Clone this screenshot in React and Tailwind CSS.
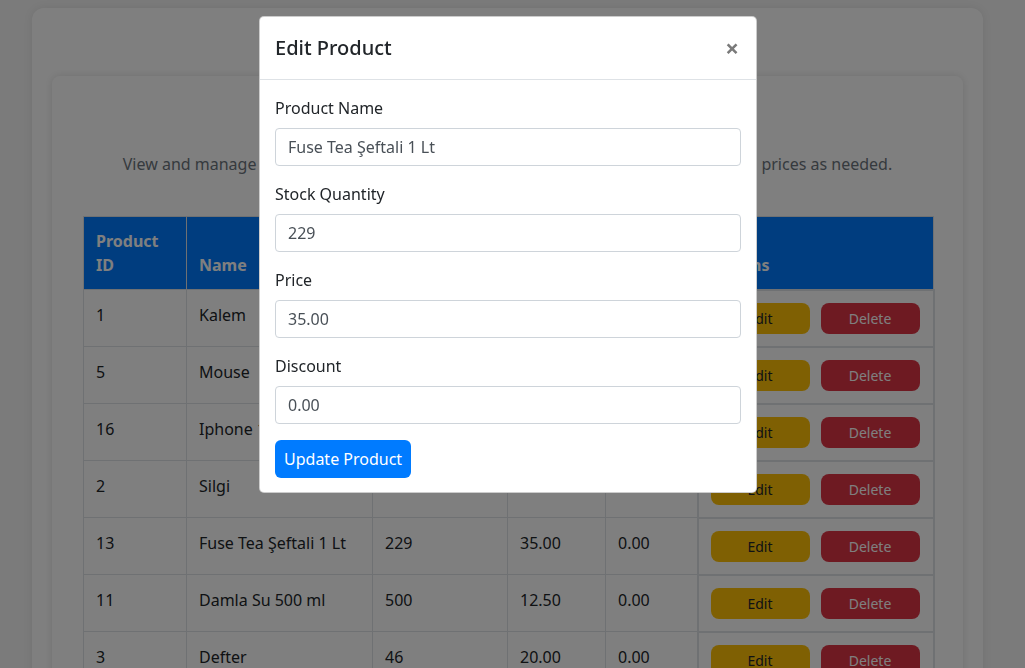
import React from "react";

const products = [
  { id: 1, name: "Kalem", stock: 120, price: "5.00", discount: "0.00" },
  { id: 5, name: "Mouse", stock: 35, price: "250.00", discount: "10.00" },
  { id: 16, name: "Iphone 15", stock: 10, price: "45000.00", discount: "0.00" },
  { id: 2, name: "Silgi", stock: 200, price: "2.50", discount: "0.00" },
  { id: 13, name: "Fuse Tea Şeftali 1 Lt", stock: 229, price: "35.00", discount: "0.00" },
  { id: 11, name: "Damla Su 500 ml", stock: 500, price: "12.50", discount: "0.00" },
  { id: 3, name: "Defter", stock: 46, price: "20.00", discount: "0.00" },
  { id: 7, name: "Klavye", stock: 18, price: "450.00", discount: "5.00" },
];

const Field = ({ label, value }) => (
  <div className="mb-4">
    <label className="block mb-2 text-[16px] leading-6 text-[#212529]">{label}</label>
    <input
      readOnly
      value={value}
      className="block w-full h-[38px] px-3 border border-[#ced4da] rounded-[4px] text-[16px] text-[#495057] bg-white outline-none"
    />
  </div>
);

const App = () => {
  return (
    <div className="relative min-h-screen bg-[#f6f6f6] font-['Noto_Sans','DejaVu_Sans',sans-serif] text-[#212529] pt-2 pb-10">
      {/* outer card */}
      <div className="ml-[32px] w-[951px] bg-white rounded-xl shadow-[0_0_10px_rgba(0,0,0,0.08)] px-5 pt-2 pb-5">
        <h1 className="text-center text-[32px] font-semibold leading-[48px] mb-3">Admin Dashboard</h1>
        {/* inner card */}
        <div className="bg-white rounded-lg shadow-[0_0_8px_rgba(0,0,0,0.12)] px-[31px] pt-[28px] pb-8">
          <h2 className="text-center text-[28px] font-semibold leading-[36px] mb-3">Product List</h2>
          <p className="text-center text-[16px] leading-6 text-[#6c757d] mb-[40px]">
            View and manage your store's products here. Update stock quantities, discounts and prices as needed.
          </p>
          <table className="w-[850px] table-fixed border-collapse text-[16px]">
            <colgroup>
              <col className="w-[103px]" />
              <col className="w-[186px]" />
              <col className="w-[135px]" />
              <col className="w-[98px]" />
              <col className="w-[92px]" />
              <col className="w-[236px]" />
            </colgroup>
            <thead>
              <tr className="bg-[#007bff] text-white">
                <th className="border border-[#dee2e6] p-3 text-left align-bottom font-bold leading-6">Product ID</th>
                <th className="border border-[#dee2e6] p-3 text-left align-bottom font-bold leading-6">Name</th>
                <th className="border border-[#dee2e6] p-3 text-left align-bottom font-bold leading-6">Stock Quantity</th>
                <th className="border border-[#dee2e6] p-3 text-left align-bottom font-bold leading-6">Price</th>
                <th className="border border-[#dee2e6] p-3 text-left align-bottom font-bold leading-6">Discount</th>
                <th className="border border-[#dee2e6] p-3 text-left align-bottom font-bold leading-6">Actions</th>
              </tr>
            </thead>
            <tbody>
              {products.map((p) => (
                <tr key={p.id} className="h-[57px]">
                  <td className="border border-[#dee2e6] px-3 pt-[13px] leading-6 align-top">{p.id}</td>
                  <td className="border border-[#dee2e6] px-3 pt-[13px] leading-6 align-top whitespace-nowrap overflow-hidden">{p.name}</td>
                  <td className="border border-[#dee2e6] px-3 pt-[13px] leading-6 align-top">{p.stock}</td>
                  <td className="border border-[#dee2e6] px-3 pt-[13px] leading-6 align-top">{p.price}</td>
                  <td className="border border-[#dee2e6] px-3 pt-[13px] leading-6 align-top">{p.discount}</td>
                  <td className="border-2 border-[#dee2e6] px-3 align-middle">
                    <div className="flex gap-[11px]">
                      <button className="w-[99px] h-[31px] rounded-lg bg-[#ffc107] text-[#212529] text-[14px]">Edit</button>
                      <button className="w-[99px] h-[31px] rounded-lg bg-[#dc3545] text-white text-[14px]">Delete</button>
                    </div>
                  </td>
                </tr>
              ))}
            </tbody>
          </table>
        </div>
      </div>

      {/* modal backdrop */}
      <div className="fixed inset-0 bg-black/50">
        <div className="absolute left-[259px] top-[16px] w-[498px] bg-white rounded-[5px] border border-black/20">
          <div className="flex items-center justify-between pl-[15px] pr-4 pt-4 pb-4 border-b border-[#dee2e6]">
            <h5 className="text-[20px] leading-[30px] font-medium text-[#212529]">Edit Product</h5>
            <button className="text-[24px] leading-none font-bold text-[#7a7a7a] mr-[1px]">×</button>
          </div>
          <div className="px-[15px] pt-4 pb-[14px]">
            <Field label="Product Name" value="Fuse Tea Şeftali 1 Lt" />
            <Field label="Stock Quantity" value="229" />
            <Field label="Price" value="35.00" />
            <Field label="Discount" value="0.00" />
            <button className="h-[38px] px-[9px] rounded-[6px] bg-[#007bff] text-white text-[16px]">Update Product</button>
          </div>
        </div>
      </div>
    </div>
  );
};

export default App;
